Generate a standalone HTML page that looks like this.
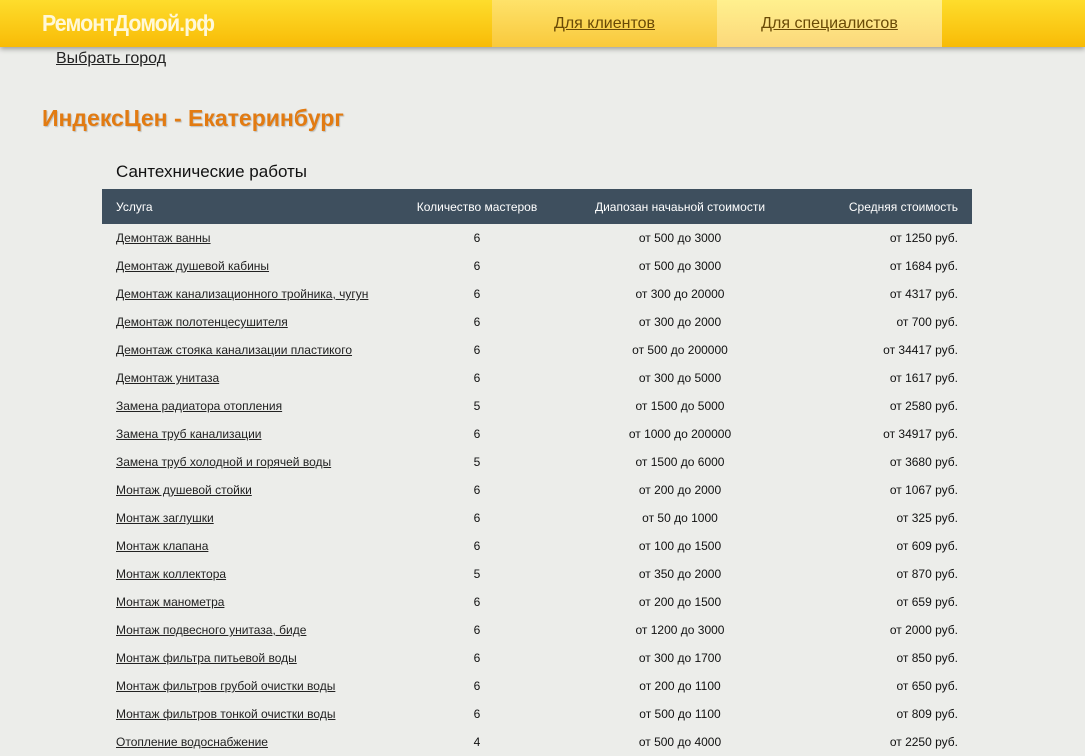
<!DOCTYPE html>
<html><head><meta charset="utf-8"><style>
body{margin:0;width:1085px;height:743px;overflow:hidden;background:#ecedea;font-family:"Liberation Sans",Arial,sans-serif;color:#111;position:relative}
.hdr{position:absolute;left:0;top:0;width:1085px;height:47px;background:linear-gradient(#fedd2c,#f8bb06);box-shadow:0 2px 5px rgba(0,0,0,.35)}
.logo{position:absolute;left:42px;top:10px;color:#fff8d8;font-weight:bold;font-size:23px;letter-spacing:-1px;transform:scaleX(0.93);transform-origin:left}
.tab{position:absolute;top:0;height:47px;width:225px;text-align:center;line-height:47px;font-size:16px}
.tab a{color:#6a4a06;text-decoration:underline}
.t1{left:492px;background:linear-gradient(#fee26a,#f9c93c)}
.t2{left:717px;background:linear-gradient(#fff08e,#fcd87a)}
.city{position:absolute;left:56px;top:50px;font-size:16px;color:#222;text-decoration:underline}
h1{position:absolute;left:42px;top:105px;margin:0;font-size:23px;color:#e27b12;font-weight:bold;text-shadow:1px 1px 1px rgba(0,0,0,.2)}
.sub{position:absolute;left:116px;top:162px;font-size:17px;color:#111}
table{position:absolute;left:102px;top:189px;width:870px;border-collapse:collapse;font-size:12px}
th{background:#3e4f5e;color:#fff;font-weight:normal;height:35px;padding:0 14px}
td{height:28px;padding:0 14px}
td a{color:#222;text-decoration:underline}
.c1{width:262px;text-align:left}.c2{width:142px;text-align:center}.c3{width:208px;text-align:center}.c4{text-align:right}
</style></head><body>
<div class="hdr"><div class="logo">РемонтДомой.рф</div>
<div class="tab t1"><a>Для клиентов</a></div><div class="tab t2"><a>Для специалистов</a></div></div>
<div class="city">Выбрать город</div>
<h1>ИндексЦен - Екатеринбург</h1>
<div class="sub">Сантехнические работы</div>
<table>
<tr><th class="c1">Услуга</th><th class="c2">Количество мастеров</th><th class="c3">Диапозан начаьной стоимости</th><th class="c4">Средняя стоимость</th></tr>
<tr><td class="c1"><a>Демонтаж ванны</a></td><td class="c2">6</td><td class="c3">от 500 до 3000</td><td class="c4">от 1250 руб.</td></tr>
<tr><td class="c1"><a>Демонтаж душевой кабины</a></td><td class="c2">6</td><td class="c3">от 500 до 3000</td><td class="c4">от 1684 руб.</td></tr>
<tr><td class="c1"><a>Демонтаж канализационного тройника, чугун</a></td><td class="c2">6</td><td class="c3">от 300 до 20000</td><td class="c4">от 4317 руб.</td></tr>
<tr><td class="c1"><a>Демонтаж полотенцесушителя</a></td><td class="c2">6</td><td class="c3">от 300 до 2000</td><td class="c4">от 700 руб.</td></tr>
<tr><td class="c1"><a>Демонтаж стояка канализации пластикого</a></td><td class="c2">6</td><td class="c3">от 500 до 200000</td><td class="c4">от 34417 руб.</td></tr>
<tr><td class="c1"><a>Демонтаж унитаза</a></td><td class="c2">6</td><td class="c3">от 300 до 5000</td><td class="c4">от 1617 руб.</td></tr>
<tr><td class="c1"><a>Замена радиатора отопления</a></td><td class="c2">5</td><td class="c3">от 1500 до 5000</td><td class="c4">от 2580 руб.</td></tr>
<tr><td class="c1"><a>Замена труб канализации</a></td><td class="c2">6</td><td class="c3">от 1000 до 200000</td><td class="c4">от 34917 руб.</td></tr>
<tr><td class="c1"><a>Замена труб холодной и горячей воды</a></td><td class="c2">5</td><td class="c3">от 1500 до 6000</td><td class="c4">от 3680 руб.</td></tr>
<tr><td class="c1"><a>Монтаж душевой стойки</a></td><td class="c2">6</td><td class="c3">от 200 до 2000</td><td class="c4">от 1067 руб.</td></tr>
<tr><td class="c1"><a>Монтаж заглушки</a></td><td class="c2">6</td><td class="c3">от 50 до 1000</td><td class="c4">от 325 руб.</td></tr>
<tr><td class="c1"><a>Монтаж клапана</a></td><td class="c2">6</td><td class="c3">от 100 до 1500</td><td class="c4">от 609 руб.</td></tr>
<tr><td class="c1"><a>Монтаж коллектора</a></td><td class="c2">5</td><td class="c3">от 350 до 2000</td><td class="c4">от 870 руб.</td></tr>
<tr><td class="c1"><a>Монтаж манометра</a></td><td class="c2">6</td><td class="c3">от 200 до 1500</td><td class="c4">от 659 руб.</td></tr>
<tr><td class="c1"><a>Монтаж подвесного унитаза, биде</a></td><td class="c2">6</td><td class="c3">от 1200 до 3000</td><td class="c4">от 2000 руб.</td></tr>
<tr><td class="c1"><a>Монтаж фильтра питьевой воды</a></td><td class="c2">6</td><td class="c3">от 300 до 1700</td><td class="c4">от 850 руб.</td></tr>
<tr><td class="c1"><a>Монтаж фильтров грубой очистки воды</a></td><td class="c2">6</td><td class="c3">от 200 до 1100</td><td class="c4">от 650 руб.</td></tr>
<tr><td class="c1"><a>Монтаж фильтров тонкой очистки воды</a></td><td class="c2">6</td><td class="c3">от 500 до 1100</td><td class="c4">от 809 руб.</td></tr>
<tr><td class="c1"><a>Отопление водоснабжение</a></td><td class="c2">4</td><td class="c3">от 500 до 4000</td><td class="c4">от 2250 руб.</td></tr>
</table>
</body></html>
